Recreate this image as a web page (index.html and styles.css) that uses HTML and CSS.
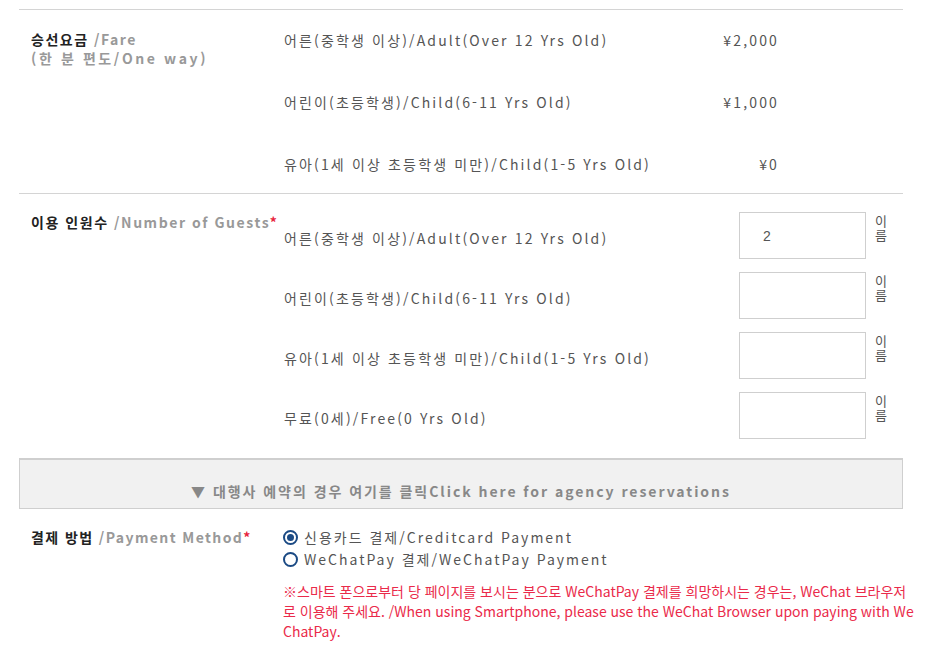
FILE: index.html
```html
<!DOCTYPE html>
<html lang="ko">
<head>
<meta charset="utf-8">
<link rel="stylesheet" href="styles.css">
</head>
<body>
<div class="form">
  <section class="row fare">
    <div class="label">
      <div class="line"><span class="ko">승선요금</span> <span class="en">/Fare</span></div>
      <div class="line sub">(한 분 편도/One way)</div>
    </div>
    <div class="body">
      <div class="fare-item"><span>어른(중학생 이상)/Adult(Over 12 Yrs Old)</span><span class="price">¥2,000</span></div>
      <div class="fare-item"><span>어린이(초등학생)/Child(6-11 Yrs Old)</span><span class="price">¥1,000</span></div>
      <div class="fare-item"><span>유아(1세 이상 초등학생 미만)/Child(1-5 Yrs Old)</span><span class="price">¥0</span></div>
    </div>
  </section>
  <section class="row guests">
    <div class="label label-guests">
      <span class="ko">이용 인원수</span> <span class="en">/Number of Guests</span><span class="req">*</span>
    </div>
    <div class="body">
      <div class="guest-item"><span class="gl">어른(중학생 이상)/Adult(Over 12 Yrs Old)</span><div class="input">2</div><span class="unit">이름</span></div>
      <div class="guest-item"><span class="gl">어린이(초등학생)/Child(6-11 Yrs Old)</span><div class="input"></div><span class="unit">이름</span></div>
      <div class="guest-item"><span class="gl">유아(1세 이상 초등학생 미만)/Child(1-5 Yrs Old)</span><div class="input"></div><span class="unit">이름</span></div>
      <div class="guest-item"><span class="gl">무료(0세)/Free(0 Yrs Old)</span><div class="input"></div><span class="unit">이름</span></div>
    </div>
  </section>
  <div class="agency">▼ 대행사 예약의 경우 여기를 클릭Click here for agency reservations</div>
  <section class="pay">
    <div class="label label-pay">
      <span class="ko">결제 방법</span> <span class="en">/Payment Method</span><span class="req">*</span>
    </div>
    <div class="body">
      <label class="radio"><span class="dot checked"></span>신용카드 결제/Creditcard Payment</label>
      <label class="radio"><span class="dot"></span>WeChatPay 결제/WeChatPay Payment</label>
      <p class="note">※스마트 폰으로부터 당 페이지를 보시는 분으로 WeChatPay 결제를 희망하시는 경우는, WeChat 브라우저로 이용해 주세요. /When using Smartphone, please use the WeChat Browser upon paying with WeChatPay.</p>
    </div>
  </section>
</div>
</body>
</html>
```
FILE: styles.css
```css
* { box-sizing: border-box; }
html, body { margin: 0; padding: 0; background: #fff; }
body {
  font-family: "Noto Sans CJK KR", "Noto Sans", sans-serif;
  color: #555;
  font-size: 14px;
}
.form {
  width: 884px;
  margin: 9px 0 0 19px;
}
.row {
  display: grid;
  grid-template-columns: 265px 1fr;
  border-top: 1px solid #d4d4d4;
}
.label {
  padding-left: 12px;
  font-weight: bold;
  line-height: 18px;
  letter-spacing: 1.5px;
}
.label .line { height: 19px; line-height: 19px; }
.label .ko { color: #222; }
.label .en { color: #999; }
.label .sub { color: #999; letter-spacing: 2.6px; }
.req { color: #e8243c; }
.fare { padding: 20px 0 19px; }
.fare .label { padding-top: 0; }
.fare .body { display: flex; flex-direction: column; gap: 42px; }
.fare-item {
  display: flex;
  justify-content: space-between;
  line-height: 20px;
  letter-spacing: 2.15px;
  padding-right: 124px;
}
.guests { padding: 18px 0 19px; }
.label-guests { letter-spacing: 1.55px; padding-top: 1px; }
.guests .body { display: flex; flex-direction: column; gap: 13px; }
.guest-item { display: flex; align-items: flex-start; }
.gl { flex: 1; line-height: 20px; letter-spacing: 2.15px; padding-top: 16px; }
.input {
  width: 127px;
  height: 47px;
  border: 1px solid #cfcfcf;
  padding: 14px 0 0 23px;
  line-height: 18px;
  font-family: "Liberation Sans", sans-serif;
  font-size: 14px;
  color: #555;
}
.unit {
  width: 14px;
  margin: 2px 14px 0 9px;
  font-size: 13px;
  line-height: 14px;
  color: #555;
}
.agency {
  height: 51px;
  background: #f1f1f1;
  border: 1px solid #cfcfcf;
  border-top-width: 2px;
  text-align: center;
  padding-top: 21px;
  line-height: 20px;
  font-weight: bold;
  color: #888;
  letter-spacing: 1.95px;
  font-size: 14px;
}
.pay {
  display: grid;
  grid-template-columns: 262px 1fr;
  padding-top: 17px;
}
.label-pay { line-height: 22px; letter-spacing: 1.4px; padding-left: 12px; }
.radio {
  display: flex;
  align-items: center;
  line-height: 22px;
  letter-spacing: 2px;
}
.dot {
  width: 15px;
  height: 15px;
  border: 2px solid #1b4a84;
  border-radius: 50%;
  margin: 0 6px 0 2px;
  position: relative;
  flex: none;
}
.dot.checked::after {
  content: "";
  position: absolute;
  left: 2px; top: 2px;
  width: 7px; height: 7px;
  border-radius: 50%;
  background: #1b4a84;
}
.note {
  margin: 11px -12px 0 2px;
  color: #ea2a4a;
  line-height: 20px;
  font-size: 14px;
  letter-spacing: 0;
  word-break: break-all;
}
```
